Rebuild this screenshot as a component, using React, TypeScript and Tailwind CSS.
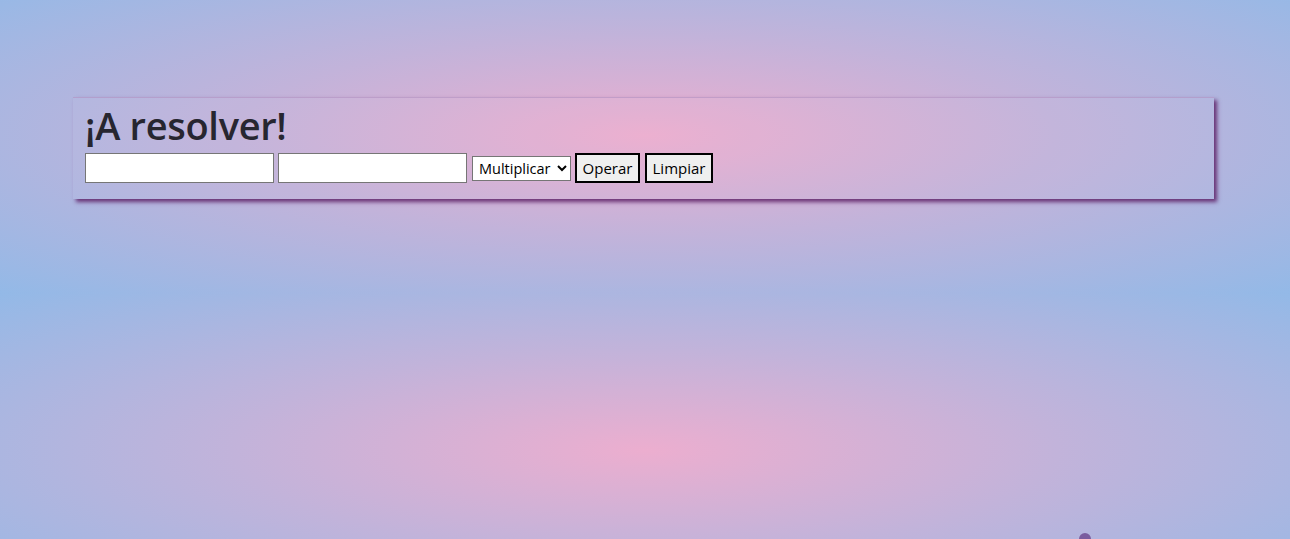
import React from 'react'

export default function App() {
  return (
    <div className="relative min-h-screen w-full overflow-hidden bg-[radial-gradient(ellipse_at_center,#ecaecf_0%,#c2b3da_45%,#93b9e7_100%)] bg-[length:100%_315px] bg-[position:0_-22px] pt-[97px] pl-[73px] font-['Open_Sans','Noto_Sans',sans-serif]">
      <div className="w-[1141px] h-[102px] bg-white/[0.03] px-3 pt-[4px] shadow-[3px_3px_4px_rgba(95,35,105,0.9)] border-t border-[#b190c0]/60">
        <h1 className="text-[38px] leading-[46px] font-semibold text-[#272630] tracking-[-0.3px]">¡A resolver!</h1>
        <div className="flex items-center gap-[4px] mt-[5px]">
          <input className="w-[189px] h-[30px] bg-white border border-[#767676] outline-none" />
          <input className="w-[189px] h-[30px] bg-white border border-[#767676] outline-none" />
          <select className="ml-[1px] h-[25px] w-[99px] bg-white border border-[#767676] text-[14.5px] text-black pl-[2px] pr-0" defaultValue="mult">
            <option value="mult">Multiplicar</option>
          </select>
          <button className="h-[30px] w-[65px] bg-[#efefef] border-2 border-black text-[15px] text-black">Operar</button>
          <button className="h-[30px] w-[68px] ml-[1px] bg-[#efefef] border-2 border-black text-[15px] text-black">Limpiar</button>
        </div>
      </div>
      <div className="absolute left-[1079px] top-[533px] w-[12px] h-[12px] rounded-full bg-[#7a5c9e]" />
    </div>
  )
}
